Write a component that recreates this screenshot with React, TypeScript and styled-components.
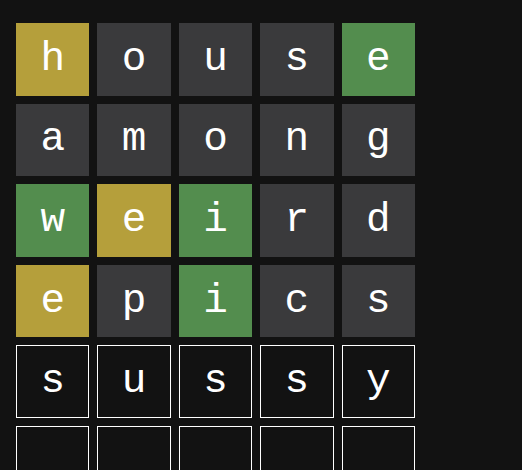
import React from "react";
import styled, { createGlobalStyle } from "styled-components";

const Global = createGlobalStyle`
  html, body { margin: 0; padding: 0; background: #121212; }
  body { width: 522px; height: 470px; overflow: hidden; }
`;

type Status = "present" | "correct" | "absent" | "typed" | "empty";

const Board = styled.div`
  display: grid;
  grid-template-columns: repeat(5, 73.4px);
  grid-template-rows: repeat(6, 72.6px);
  column-gap: 8px;
  row-gap: 8px;
  padding: 23px 0 0 16px;
`;

const colors: Record<Status, string> = {
  present: "#b59f3b",
  correct: "#538d4e",
  absent: "#3a3a3c",
  typed: "#121212",
  empty: "#121212",
};

const Tile = styled.div<{ $status: Status }>`
  box-sizing: border-box;
  display: flex;
  align-items: center;
  justify-content: center;
  background: ${(p) => colors[p.$status]};
  border: ${(p) => (p.$status === "typed" || p.$status === "empty" ? "1px solid #ffffff" : "none")};
  color: #ffffff;
  font-family: "Liberation Mono", "DejaVu Sans Mono", monospace;
  font-size: 41px;
  font-weight: 300;
  line-height: 1;
`;

const rows: [string, Status[]][] = [
  ["house", ["present", "absent", "absent", "absent", "correct"]],
  ["among", ["absent", "absent", "absent", "absent", "absent"]],
  ["weird", ["correct", "present", "correct", "absent", "absent"]],
  ["epics", ["present", "absent", "correct", "absent", "absent"]],
  ["sussy", ["typed", "typed", "typed", "typed", "typed"]],
  ["     ", ["empty", "empty", "empty", "empty", "empty"]],
];

export default function App() {
  return (
    <>
      <Global />
      <Board>
        {rows.map(([word, st], r) =>
          word.split("").map((ch, c) => (
            <Tile key={`${r}-${c}`} $status={st[c]}>
              {ch.trim()}
            </Tile>
          ))
        )}
      </Board>
    </>
  );
}
